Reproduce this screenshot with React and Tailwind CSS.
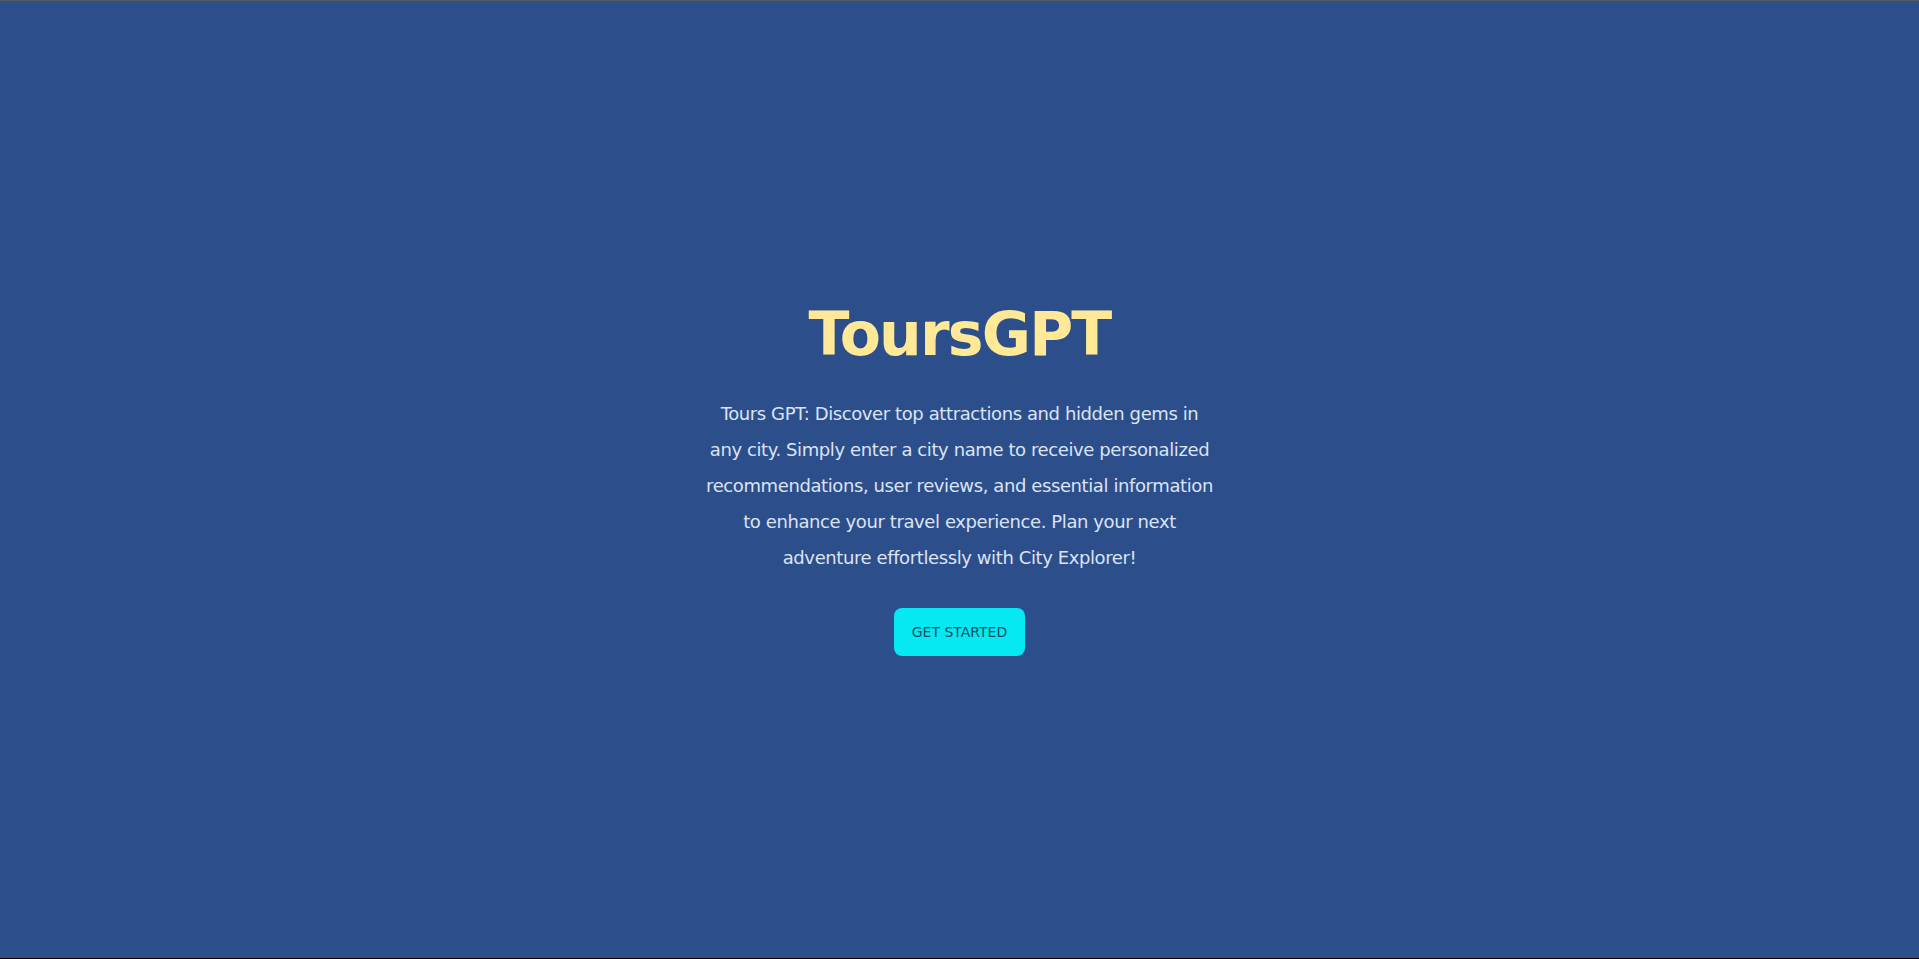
export default function App() {
  return (
    <div
      className="min-h-screen flex items-center justify-center bg-[#2c4f8c] border-t border-[#555a63] border-b border-b-black tracking-tight"
      style={{ fontFamily: '"DejaVu Sans", Verdana, sans-serif' }}
    >
      <div className="text-center max-w-lg">
        <h1 className="text-6xl font-bold tracking-[-0.03em] text-[#ffe896]">ToursGPT</h1>
        <p className="py-8 text-lg leading-loose text-[#dbe3f3]">
          Tours GPT: Discover top attractions and hidden gems in any city. Simply enter a city name to
          receive personalized recommendations, user reviews, and essential information to enhance
          your travel experience. Plan your next adventure effortlessly with City Explorer!
        </p>
        <button className="h-12 px-[18px] rounded-lg bg-[#06e8f2] text-[#0f5060] text-sm font-normal tracking-normal uppercase">
          Get Started
        </button>
      </div>
    </div>
  );
}
